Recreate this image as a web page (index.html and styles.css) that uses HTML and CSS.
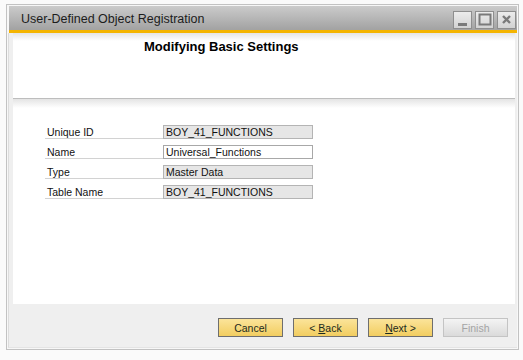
FILE: index.html
```html
<!DOCTYPE html>
<html>
<head>
<meta charset="utf-8">
<link rel="stylesheet" href="styles.css">
</head>
<body>
<div class="window">
  <div class="titlebar">
    <span class="title">User-Defined Object Registration</span>
    <div class="winbtns">
      <span class="wbtn"><svg width="17" height="16" viewBox="0 0 17 16"><rect x="4" y="11" width="9" height="3" fill="#7a7a7a"/></svg></span>
      <span class="wbtn"><svg width="17" height="16" viewBox="0 0 17 16"><rect x="3.5" y="2.5" width="11" height="10" fill="none" stroke="#7a7a7a" stroke-width="2"/></svg></span>
      <span class="wbtn"><svg width="17" height="16" viewBox="0 0 17 16"><path d="M5 4 L12 11 M12 4 L5 11" stroke="#7a7a7a" stroke-width="2.4"/></svg></span>
    </div>
  </div>
  <div class="accent"></div>
  <div class="frame">
    <div class="header">
      <div class="heading">Modifying Basic Settings</div>
    </div>
    <div class="body">
      <div class="row"><span class="label">Unique ID</span><span class="field ro">BOY_41_FUNCTIONS</span></div>
      <div class="row"><span class="label">Name</span><span class="field">Universal_Functions</span></div>
      <div class="row"><span class="label">Type</span><span class="field ro">Master Data</span></div>
      <div class="row"><span class="label">Table Name</span><span class="field ro">BOY_41_FUNCTIONS</span></div>
    </div>
    <div class="footer">
      <button class="btn">Cancel</button>
      <button class="btn">&lt; <u>B</u>ack</button>
      <button class="btn"><u>N</u>ext &gt;</button>
      <button class="btn disabled">Finish</button>
    </div>
  </div>
</div>
</body>
</html>
```
FILE: styles.css
```css
* { box-sizing: border-box; }
html, body { margin: 0; padding: 0; }
body {
  background: #fafafa;
  font-family: "Liberation Sans", Arial, sans-serif;
  width: 523px;
  height: 360px;
  overflow: hidden;
}
.window {
  margin: 4px 0 0 6px;
  width: 513px;
  height: 346px;
  border: 1px solid #c2c2c2;
  background: #f7f7f7;
  padding: 1px 1px 1px 1px;
  display: flex;
  flex-direction: column;
}
.titlebar {
  height: 24px;
  margin-left: 1px;
  background: linear-gradient(#cbcbcb, #a2a2a2);
  display: flex;
  align-items: center;
  justify-content: space-between;
  padding: 0 1px 0 12px;
}
.title {
  font-size: 12.5px;
  color: #1c1c1c;
  padding-top: 2px;
}
.winbtns {
  display: flex;
  gap: 3px;
  padding-top: 3px;
}
.wbtn {
  width: 19px;
  height: 18px;
  border: 1px solid #8e8e8e;
  background: linear-gradient(#ececec, #d2d2d2);
  display: flex;
}
.accent {
  height: 3px;
  margin-left: 1px;
  background: #f4b400;
}
.frame {
  flex: 1;
  display: flex;
  flex-direction: column;
  background: #efefef;
  border-left: 1px solid #dcdcdc;
  padding-left: 4px;
  padding-right: 2px;
  border-bottom: 1px solid #e4e4e4;
}
.header {
  height: 66px;
  background: linear-gradient(#e4e4e4, #ffffff 8px);
  padding: 6px 0 0 131px;
  border-bottom: 1px solid #bdbdbd;
}
.heading {
  font-weight: bold;
  font-size: 13px;
  line-height: 16px;
  color: #000;
}
.body {
  height: 205px;
  background: linear-gradient(#e4e4e4, #ffffff 9px);
  padding: 26px 0 0 32px;
  display: flex;
  flex-direction: column;
  gap: 6px;
}
.row {
  display: flex;
  height: 14px;
}
.label {
  width: 118px;
  height: 14px;
  border-bottom: 1px solid #d2d2d2;
  font-size: 10.5px;
  line-height: 14px;
  padding-left: 2px;
  color: #111;
}
.field {
  width: 150px;
  height: 14px;
  border: 1px solid #a8a8a8;
  background: #fff;
  font-size: 10.5px;
  line-height: 13px;
  padding-left: 2px;
  color: #111;
}
.field.ro {
  background: #e6e6e6;
  border-color: #b4b4b4;
}
.footer {
  flex: 1;
  display: flex;
  justify-content: flex-end;
  align-items: flex-start;
  gap: 10px;
  padding: 14px 7px 0 0;
}
.btn {
  width: 65px;
  height: 19px;
  border: 1px solid #6e6e6e;
  background: linear-gradient(#fbe49a, #f2cd60);
  font-family: "Liberation Sans", Arial, sans-serif;
  font-size: 10.5px;
  color: #1b2a20;
  padding: 0;
  margin: 0;
}
.btn.disabled {
  border-color: #c4c4c4;
  background: linear-gradient(#f4f4f4, #dadada);
  color: #a4a4a4;
}
```
